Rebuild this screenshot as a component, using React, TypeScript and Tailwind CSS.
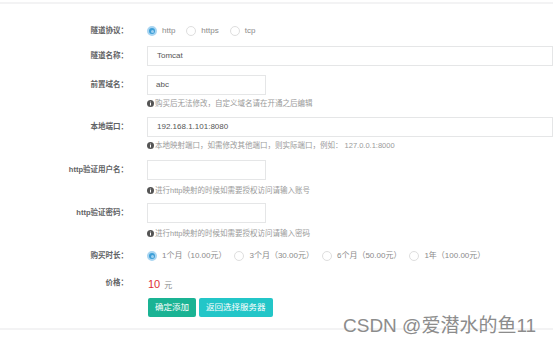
import React from 'react'

const font = { fontFamily: '"Liberation Sans", "Noto Sans CJK SC", sans-serif' }

function Radio({ checked, label }: { checked?: boolean; label: string }) {
  return (
    <label className="flex items-center">
      {checked ? (
        <span className="flex h-[10px] w-[10px] items-center justify-center rounded-full border-2 border-[#a9d5f1] bg-[#3d9fd8]">
          <span className="h-[3px] w-[3px] rounded-full bg-[#9fd0f0]" />
        </span>
      ) : (
        <span className="h-[10px] w-[10px] rounded-full border border-[#dedede] bg-white" />
      )}
      <span className="ml-[5px] text-[8px] text-[#8a8a8a]">{label}</span>
    </label>
  )
}

function Hint({ text, className }: { text: string; className: string }) {
  return (
    <div className={`flex h-[9px] items-center text-[7.5px] text-[#9a9a9a] ${className}`}>
      <svg width="7" height="7" viewBox="0 0 14 14" className="mr-[1px] shrink-0">
        <circle cx="7" cy="7" r="7" fill="#555" />
        <rect x="6" y="6" width="2" height="5" fill="#fff" />
        <circle cx="7" cy="4" r="1.1" fill="#fff" />
      </svg>
      <span>{text}</span>
    </div>
  )
}

function Label({ text, h }: { text: string; h: string }) {
  return (
    <div className={`flex w-[147px] shrink-0 items-center justify-end pr-[19px] text-[7.5px] font-bold text-[#5f6264] ${h}`}>
      {text}
    </div>
  )
}

export default function App() {
  return (
    <div className="relative h-[345px] w-[553px] overflow-hidden bg-white" style={font}>
      <div className="mt-[2px] border-t-2 border-[#f3f3f4]" />

      <div className="mt-[21px] flex">
        <Label text="隧道协议：" h="h-[12px]" />
        <div className="flex h-[12px] items-center gap-[11px]">
          <Radio checked label="http" />
          <Radio label="https" />
          <Radio label="tcp" />
        </div>
      </div>

      <div className="mt-[9px] flex">
        <Label text="隧道名称：" h="h-[20px]" />
        <div className="flex h-[20px] flex-1 items-center border border-[#e5e6e7] pl-[9px] text-[8px] text-[#555]">Tomcat</div>
      </div>

      <div className="mt-[9px] flex">
        <Label text="前置域名：" h="h-[20px]" />
        <div className="flex flex-col">
          <div className="flex h-[20px] w-[119px] items-center border border-[#e5e6e7] pl-[8px] text-[8px] text-[#555]">abc</div>
          <Hint className="mt-[4px]" text="购买后无法修改，自定义域名请在开通之后编辑" />
        </div>
      </div>

      <div className="mt-[9px] flex">
        <Label text="本地端口：" h="h-[20px]" />
        <div className="flex flex-1 flex-col">
          <div className="flex h-[20px] items-center border border-[#e5e6e7] pl-[9px] text-[8px] text-[#555]">192.168.1.101:8080</div>
          <Hint className="mt-[4px]" text="本地映射端口，如需修改其他端口，则实际端口，例如： 127.0.0.1:8000" />
        </div>
      </div>

      <div className="mt-[10px] flex">
        <Label text="http验证用户名：" h="h-[20px]" />
        <div className="flex flex-col">
          <div className="h-[20px] w-[119px] border border-[#e5e6e7]" />
          <Hint className="mt-[6px]" text="进行http映射的时候如需要授权访问请输入账号" />
        </div>
      </div>

      <div className="mt-[8px] flex">
        <Label text="http验证密码：" h="h-[20px]" />
        <div className="flex flex-col">
          <div className="h-[20px] w-[119px] border border-[#e5e6e7]" />
          <Hint className="mt-[6px]" text="进行http映射的时候如需要授权访问请输入密码" />
        </div>
      </div>

      <div className="mt-[12px] flex">
        <Label text="购买时长：" h="h-[12px]" />
        <div className="flex h-[12px] items-center gap-[8px]">
          <Radio checked label="1个月（10.00元）" />
          <Radio label="3个月（30.00元）" />
          <Radio label="6个月（50.00元）" />
          <Radio label="1年（100.00元）" />
        </div>
      </div>

      <div className="mt-[14px] flex">
        <Label text="价格：" h="h-[14px]" />
        <div className="flex h-[14px] items-baseline pl-[1px]">
          <span className="text-[11px] text-[#e02f35]">10</span>
          <span className="ml-[4px] text-[8px] text-[#8a8a8a]">元</span>
        </div>
      </div>

      <div className="mt-[8px] flex">
        <div className="w-[148px] shrink-0" />
        <div className="flex gap-[3px]">
          <button className="flex h-[19px] items-center rounded-[2px] bg-[#1ab394] px-[7px] text-[8.5px] text-white">确定添加</button>
          <button className="flex h-[19px] items-center rounded-[2px] bg-[#23c6c8] px-[7px] text-[8.5px] text-white">返回选择服务器</button>
        </div>
      </div>

      <div className="mt-[11px] border-t-2 border-[#f3f3f4]" />

      <div className="absolute left-[343px] top-[316px] text-[19px] leading-none text-[#8c8c8c]">CSDN @爱潜水的鱼11</div>
    </div>
  )
}
